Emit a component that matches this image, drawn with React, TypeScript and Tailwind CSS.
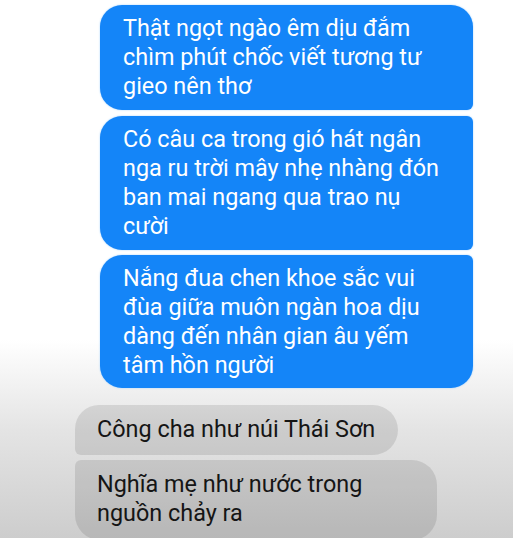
import React from "react";

const font = { fontFamily: "Roboto, 'Noto Sans', sans-serif" };

export default function App() {
  return (
    <div
      className="w-[513px] h-[538px] overflow-hidden bg-[linear-gradient(to_bottom,#ffffff_0px,#ffffff_340px,#e4e4e4_430px,#cdcdcd_538px)]"
      style={font}
    >
      <div className="flex flex-col items-end pr-[40px] pt-[5px] gap-[5px]">
        <div className="w-[373px] bg-[#1485f8] text-white text-[23.4px] leading-[29px] pl-[23px] pr-[8px] pt-[9px] pb-[9px] rounded-tl-[22px] rounded-tr-[22px] rounded-bl-[22px] rounded-br-[6px] shadow-[0_0_2px_#9fd0ff]">
          Thật ngọt ngào êm dịu đắm
          <br />
          chìm phút chốc viết tương tư
          <br />
          gieo nên thơ
        </div>
        <div className="w-[373px] mt-px bg-[#1485f8] text-white text-[23.4px] leading-[29px] pl-[23px] pr-[8px] pt-[9px] pb-[9px] rounded-tl-[22px] rounded-tr-[6px] rounded-bl-[22px] rounded-br-[6px] shadow-[0_0_2px_#9fd0ff]">
          Có câu ca trong gió hát ngân
          <br />
          nga ru trời mây nhẹ nhàng đón
          <br />
          ban mai ngang qua trao nụ
          <br />
          cười
        </div>
        <div className="w-[373px] bg-[#1485f8] text-white text-[23.4px] leading-[29px] pl-[23px] pr-[8px] pt-[9px] pb-[8px] rounded-tl-[22px] rounded-tr-[6px] rounded-bl-[22px] rounded-br-[22px] shadow-[0_0_2px_#9fd0ff]">
          Nắng đua chen khoe sắc vui
          <br />
          đùa giữa muôn ngàn hoa dịu
          <br />
          dàng đến nhân gian âu yếm
          <br />
          tâm hồn người
        </div>
      </div>
      <div className="flex flex-col items-start pl-[75px] mt-[17px] gap-[5px]">
        <div className="w-[323px] bg-black/10 text-[#151515] text-[23.4px] leading-[29px] pl-[22px] pt-[10px] pb-[11px] rounded-tl-[24px] rounded-tr-[25px] rounded-br-[25px] rounded-bl-[6px]">
          Công cha như núi Thái Sơn
        </div>
        <div className="w-[362px] bg-black/10 text-[#151515] text-[23.4px] leading-[29px] pl-[22px] pt-[10px] pb-[12px] rounded-tl-[6px] rounded-tr-[25px] rounded-br-[25px] rounded-bl-[25px]">
          Nghĩa mẹ như nước trong
          <br />
          nguồn chảy ra
        </div>
      </div>
    </div>
  );
}
